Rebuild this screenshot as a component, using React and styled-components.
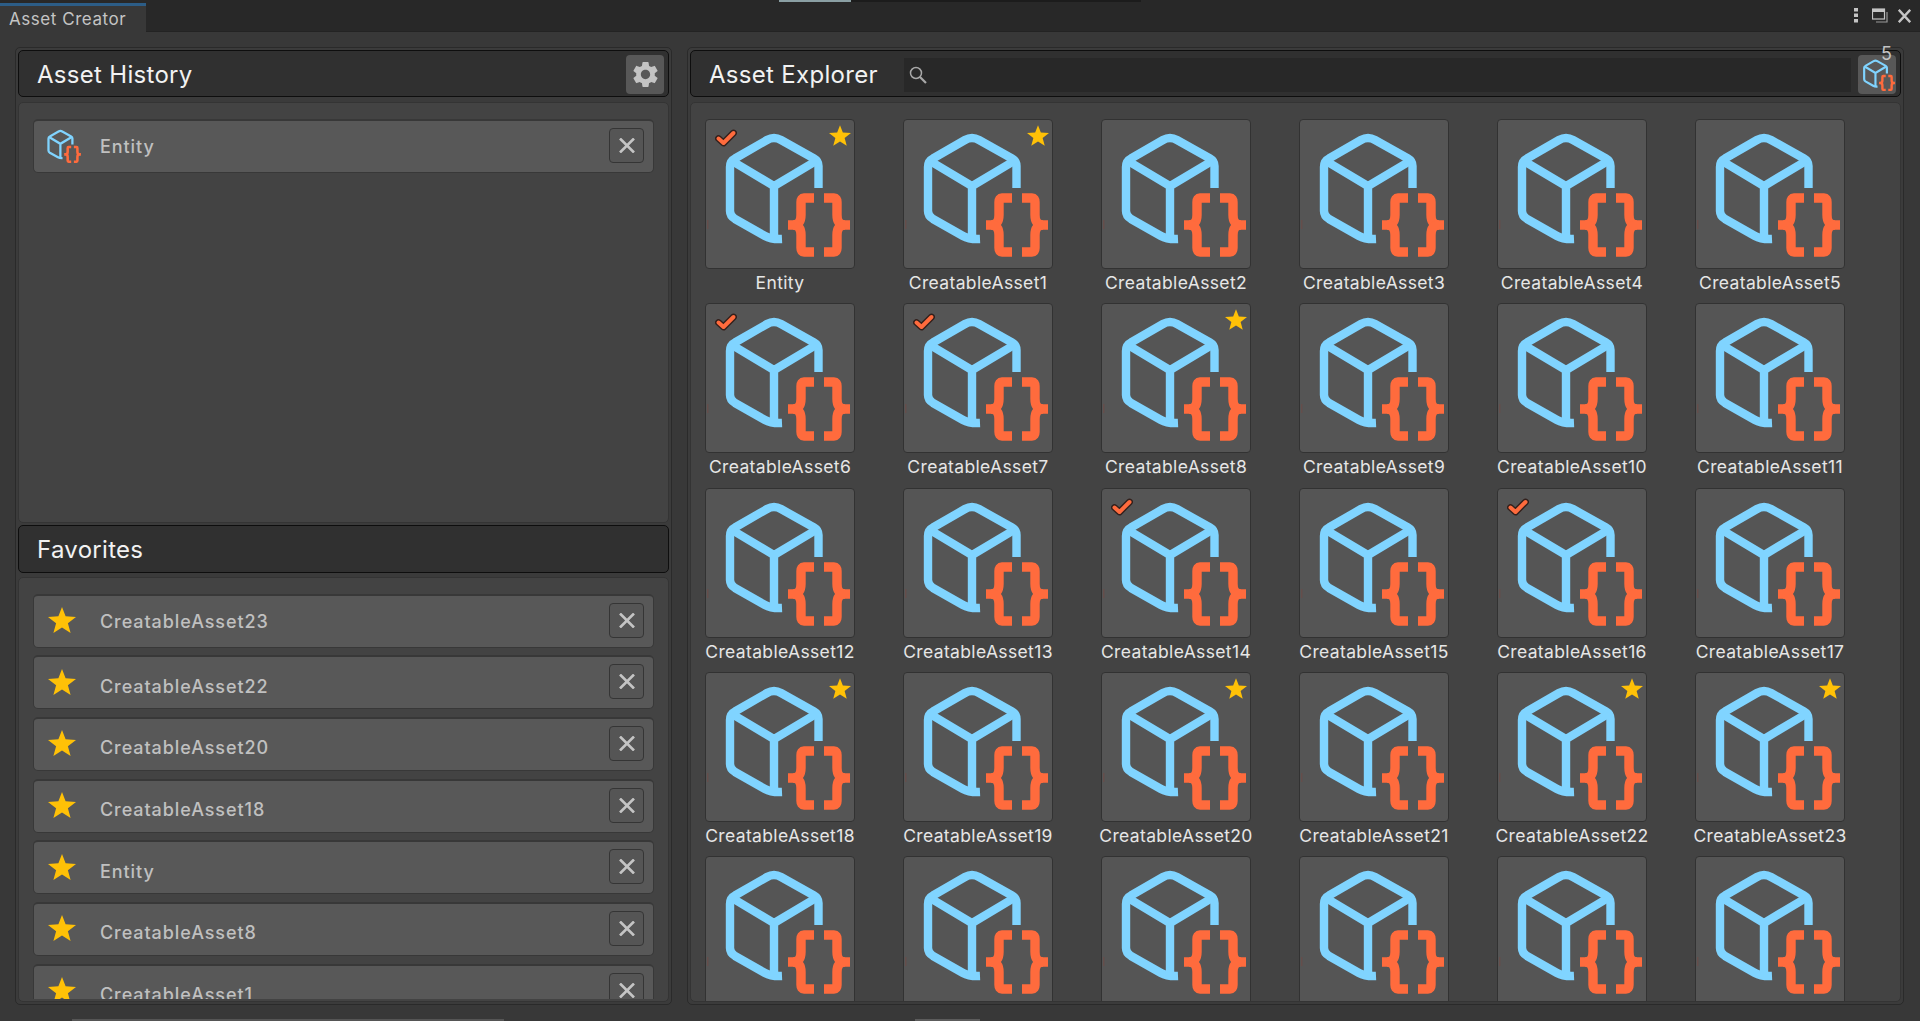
import React from "react";
import styled, { createGlobalStyle } from "styled-components";
import { MdSettings } from "react-icons/md";

const historyItems = ["Entity"];
const favoriteItems = [
  "CreatableAsset23",
  "CreatableAsset22",
  "CreatableAsset20",
  "CreatableAsset18",
  "Entity",
  "CreatableAsset8",
  "CreatableAsset1",
];
const checked = [0, 6, 7, 14, 16];
const starred = [0, 1, 8, 18, 20, 22, 23];
const assets = Array.from({ length: 24 }, (_, i) => ({
  id: i,
  name: i === 0 ? "Entity" : `CreatableAsset${i}`,
  checked: checked.includes(i),
  starred: starred.includes(i),
}));
// the fifth row is scrolled past the panel edge, only the tiles show
const clippedRow = [24, 25, 26, 27, 28, 29];

function AssetIcon({ size = 148 }) {
  return (
    <svg width={size} height={size} viewBox="1 1 148 148" fill="none" style={{ flex: "none", display: "block" }}>
      <path d="M2.8 101v9" stroke="#6d4c48" strokeWidth="1" />
      <g stroke="#80d4ff" strokeWidth="8.4">
        <path d="M113.5 69V47Q113.5 42 109 39.500L76 21Q69 17 62 21L30 39.500Q25 42 25 48V92Q25 97 30 100L60 117Q66 120.500 77 120" />
        <path d="M27 42L69 67L111 42M69 67V118" />
      </g>
      <g stroke="#ff6b3d" strokeWidth="9.4" strokeLinejoin="round">
        <path d="M109 79H99Q96 79 96 83V96Q96 106 88 106H83" />
        <path d="M109 133H99Q96 133 96 129V116Q96 106 88 106" />
        <path d="M119 79H129Q132 79 132 83V96Q132 106 140 106H145" />
        <path d="M119 133H129Q132 133 132 129V116Q132 106 140 106" />
      </g>
    </svg>
  );
}

function StarIcon({ className }) {
  return (
    <svg className={className} viewBox="0 0 28 26" fill="#ffc107">
      <path d="M14 0L17.600 9.300L28 9.900L19.900 16.300L22.600 26L14 20.600L5.400 26L8.100 16.300L0 9.900L10.400 9.300Z" />
    </svg>
  );
}

function CrossIcon() {
  return (
    <svg width="16" height="15" viewBox="0 0 16 15" stroke="#c4c4c4" strokeWidth="2.600">
      <path d="M1 0.500L15 14.500M15 0.500L1 14.500" />
    </svg>
  );
}

export default function App() {
  return (
    <Page>
      <GlobalStyle />
      <TopStrip>
        <StripPart $width={779} />
        <StripPart $width={72} $color="#8a9fa3" />
        <StripPart $width={290} $color="#1c1c1c" />
      </TopStrip>
      <TabBar>
        <Tab>Asset Creator</Tab>
        <WindowActions>
          <svg width="6" height="15" viewBox="0 0 6 15" fill="#c4c4c4">
            <rect x="1" y="0" width="4" height="3.500" />
            <rect x="1" y="5.500" width="4" height="3.500" />
            <rect x="1" y="11" width="4" height="3.500" />
          </svg>
          <RestoreIcon width="16" height="15" viewBox="0 0 16 15" fill="none" stroke="#c4c4c4">
            <rect x="0.500" y="1" width="12" height="10" strokeWidth="1.200" />
            <path d="M0.500 2.500H12.500" strokeWidth="3" />
            <path d="M15 4V14H4" strokeWidth="1.200" stroke="#9a9a9a" />
          </RestoreIcon>
          <svg width="13" height="14" viewBox="0 0 13 14" stroke="#c4c4c4" strokeWidth="2.400">
            <path d="M0.800 0.800L12.200 13.200M12.200 0.800L0.800 13.200" />
          </svg>
        </WindowActions>
      </TabBar>
      <Main>
        <LeftPanel>
          <Header $height={47}>
            <Title>Asset History</Title>
            <HeaderButton>
              <MdSettings size={31} color="#c4c4c4" />
            </HeaderButton>
          </Header>
          <Body $height={421} $mt={5}>
            <List>
              {historyItems.map((name) => (
                <ListItem key={name}>
                  <ItemIcon>
                    <AssetIcon size={40} />
                  </ItemIcon>
                  <ItemName>{name}</ItemName>
                  <RemoveButton>
                    <CrossIcon />
                  </RemoveButton>
                </ListItem>
              ))}
            </List>
          </Body>
          <Header $height={48} $mt={2}>
            <Title>Favorites</Title>
          </Header>
          <Body $height={425} $mt={4}>
            <List>
              {favoriteItems.map((name) => (
                <ListItem key={name}>
                  <ItemIcon>
                    <ItemStar />
                  </ItemIcon>
                  <ItemName>{name}</ItemName>
                  <RemoveButton>
                    <CrossIcon />
                  </RemoveButton>
                </ListItem>
              ))}
            </List>
          </Body>
        </LeftPanel>
        <RightPanel>
          <Header $height={47}>
            <ExplorerTitle>Asset Explorer</ExplorerTitle>
            <SearchBox>
              <svg width="18" height="18" viewBox="0 0 18 18" fill="none" stroke="#a8a8a8">
                <circle cx="7" cy="7" r="5.500" strokeWidth="1.500" />
                <path d="M11 11L17 17" strokeWidth="2.200" />
              </svg>
            </SearchBox>
            <AssetCountButton>
              <AssetIcon size={38} />
              <CountBadge>5</CountBadge>
            </AssetCountButton>
          </Header>
          <GrowBody $mt={5}>
            <AssetGrid>
              {assets.map((asset) => (
                <AssetCell key={asset.id}>
                  <Tile>
                    <AssetIcon />
                    {asset.checked && (
                      <CheckMark viewBox="0 0 22 18" fill="none" strokeLinecap="round" strokeLinejoin="round">
                        <path d="M3.500 9.500L8.500 14L18.500 4" stroke="#33201c" strokeWidth="6.800" />
                        <path d="M3.500 9.500L8.500 14L18.500 4" stroke="#ff6b3d" strokeWidth="4" />
                      </CheckMark>
                    )}
                    {asset.starred && <TileStar />}
                  </Tile>
                  <TileLabel>{asset.name}</TileLabel>
                </AssetCell>
              ))}
              {clippedRow.map((id) => (
                <AssetCell key={id}>
                  <Tile>
                    <AssetIcon />
                  </Tile>
                </AssetCell>
              ))}
            </AssetGrid>
          </GrowBody>
        </RightPanel>
      </Main>
      <BottomStrip>
        <StripPart $width={72} />
        <StripPart $width={432} $color="#555555" />
        <StripPart $width={411} />
        <StripPart $width={65} $color="#5c5c5c" />
      </BottomStrip>
    </Page>
  );
}

const GlobalStyle = createGlobalStyle`
  html, body {
    margin: 0;
    padding: 0;
    background: #383838;
  }
  * {
    box-sizing: border-box;
  }
`;

const Page = styled.div`
  width: 1920px;
  height: 1021px;
  display: flex;
  flex-direction: column;
  overflow: hidden;
  background: #383838;
  font-family: Inter, "Liberation Sans", sans-serif;
`;

const TopStrip = styled.div`
  height: 3px;
  flex: none;
  display: flex;
  align-items: flex-start;
  background: #282828;
`;

const StripPart = styled.div`
  width: ${(p) => p.$width}px;
  height: 2px;
  background: ${(p) => p.$color || "transparent"};
`;

const TabBar = styled.div`
  height: 29px;
  flex: none;
  display: flex;
  align-items: stretch;
  background: #282828;
  border-bottom: 1px solid #232323;
`;

const Tab = styled.div`
  width: 146px;
  height: 29px;
  padding: 2px 0 0 9px;
  background: #383838;
  border-top: 3px solid #2c5d87;
  color: #c4c4c4;
  font-size: 17px;
  letter-spacing: 0.55px;
  line-height: 22px;
  white-space: nowrap;
`;

const WindowActions = styled.div`
  margin-left: auto;
  display: flex;
  align-items: center;
  gap: 10px;
  padding: 0 9px 3px 0;
`;

const RestoreIcon = styled.svg`
  margin-left: 3px;
`;

const Main = styled.div`
  flex: 1;
  display: flex;
  gap: 15px;
  padding: 15px 16px 0 15px;
  min-height: 0;
`;

const Panel = styled.section`
  height: 958px;
  display: flex;
  flex-direction: column;
  padding: 2px;
  border: 1px solid #2a2a2a;
  border-radius: 5px;
  background: #3b3b3b;
`;

const LeftPanel = styled(Panel)`
  width: 657px;
  flex: none;
`;

const RightPanel = styled(Panel)`
  flex: 1;
`;

const Header = styled.header`
  height: ${(p) => p.$height}px;
  margin-top: ${(p) => p.$mt || 0}px;
  flex: none;
  display: flex;
  align-items: center;
  padding: 2px 4px 0 18px;
  background: #303030;
  border: 1px solid #0e0e0e;
  border-radius: 5px;
`;

const Title = styled.h2`
  margin: 0;
  color: #f2f2f2;
  font-size: 24px;
  font-weight: 400;
  letter-spacing: 0.3px;
  line-height: 30px;
  white-space: nowrap;
`;

const ExplorerTitle = styled(Title)`
  width: 195px;
  flex: none;
`;

const HeaderButton = styled.div`
  width: 38px;
  height: 39px;
  margin-left: auto;
  display: flex;
  align-items: center;
  justify-content: center;
  background: #585858;
  border-radius: 4px;
`;

const SearchBox = styled.div`
  flex: 1;
  height: 34px;
  display: flex;
  align-items: center;
  padding-left: 5px;
  background: #282828;
`;

const AssetCountButton = styled(HeaderButton)`
  position: relative;
  margin-left: 7px;
`;

const CountBadge = styled.span`
  position: absolute;
  top: -12px;
  left: 23px;
  color: #c4c4c4;
  font-size: 18px;
  line-height: 22px;
`;

const Body = styled.div`
  height: ${(p) => p.$height}px;
  margin-top: ${(p) => p.$mt || 0}px;
  flex: none;
  min-height: 0;
  background: #434343;
  border: 1px solid #343434;
  border-radius: 5px;
`;

const GrowBody = styled(Body)`
  flex: 1;
`;

const List = styled.div`
  height: calc(100% - 2px);
  overflow: hidden;
  display: flex;
  flex-direction: column;
  gap: 7.7px;
  padding: 15.5px 14px 0;
`;

const ListItem = styled.div`
  height: 54px;
  flex: none;
  display: flex;
  align-items: center;
  padding: 0 9px 0 0;
  background: #585858;
  border: 1px solid #383838;
  border-top-width: 2px;
  border-radius: 5px;
`;

const ItemIcon = styled.div`
  width: 66px;
  height: 40px;
  flex: none;
  display: flex;
  align-items: center;
  padding-left: 8px;
`;

const ItemStar = styled(StarIcon)`
  width: 28px;
  height: 26px;
  margin-left: 6px;
  margin-top: -2px;
`;

const ItemName = styled.span`
  flex: 1;
  margin-top: 7px;
  color: #c0c0c0;
  font-size: 18px;
  font-weight: 500;
  letter-spacing: 0.92px;
  white-space: nowrap;

  ${ListItem}:first-child & {
    margin-top: 1px;
  }
`;

const RemoveButton = styled.div`
  width: 35px;
  height: 35px;
  flex: none;
  display: flex;
  align-items: center;
  justify-content: center;
  margin-top: -2px;
  background: #555555;
  border: 1px solid #353535;
  border-radius: 4px;
`;

const AssetGrid = styled.div`
  height: 100%;
  overflow: hidden;
  display: grid;
  grid-template-columns: repeat(6, 150px);
  grid-auto-rows: 184.4px;
  column-gap: 48px;
  padding: 15.8px 0 0 14px;
`;

const AssetCell = styled.div`
  width: 150px;
  display: flex;
  flex-direction: column;
  align-items: center;
`;

const Tile = styled.div`
  position: relative;
  width: 150px;
  height: 150px;
  flex: none;
  background: #555555;
  border: 1px solid #323232;
  border-radius: 4px;
`;

const CheckMark = styled.svg`
  position: absolute;
  top: 9px;
  left: 9px;
  width: 22px;
  height: 18px;
`;

const TileStar = styled(StarIcon)`
  position: absolute;
  top: 5px;
  left: 123px;
  width: 22px;
  height: 21px;
`;

const TileLabel = styled.span`
  margin-top: 3px;
  color: #e6e6e6;
  font-size: 17.500px;
  letter-spacing: 0.36px;
  line-height: 22px;
  white-space: nowrap;
`;

const BottomStrip = styled.div`
  height: 2px;
  flex: none;
  display: flex;
`;
